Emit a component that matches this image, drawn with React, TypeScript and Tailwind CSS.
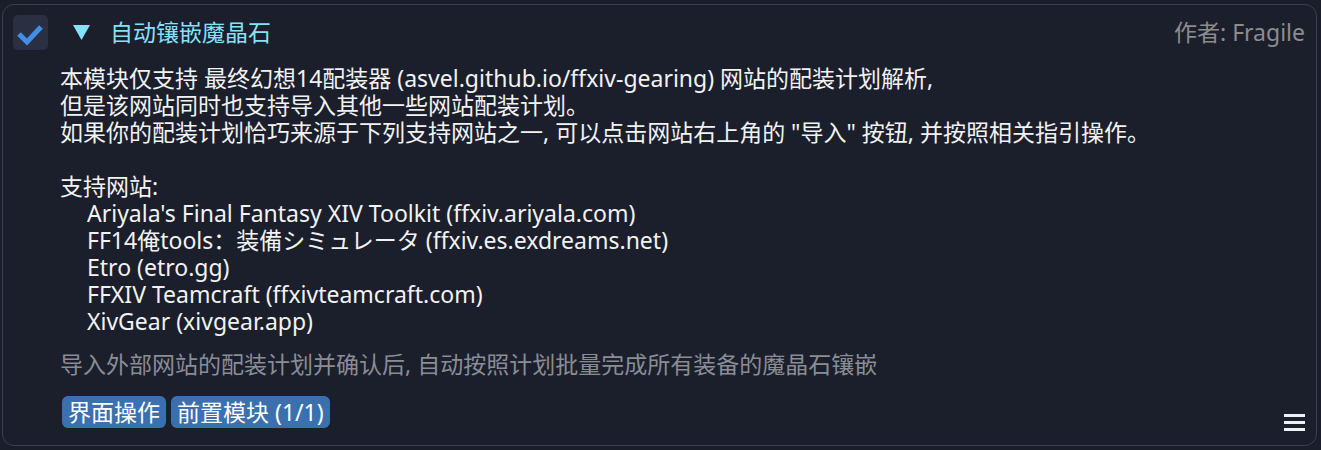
import React from "react";

const font = { fontFamily: '"Noto Sans", "Noto Sans CJK SC", sans-serif' };

export default function App() {
  return (
    <div className="w-[1321px] h-[450px] bg-[#1a1e2b] pt-[4px] pl-[2px]" style={font}>
      <div className="relative w-[1315px] h-[442px] rounded-[12px] border border-[#3a4154] bg-[#1b1f2c] text-[23px] leading-[27px] text-[#f2f2f2]">
        <div className="flex items-center pt-[10px] pl-[10px] pr-[11px]">
          <div className="w-[35px] h-[35px] rounded-[5px] bg-[#2a3042] flex items-center justify-center">
            <svg width="35" height="35" viewBox="0 0 35 35">
              <polyline points="6,19 14,27 28,12" fill="none" stroke="#3f8fe6" strokeWidth="5" strokeLinecap="butt" strokeLinejoin="miter" />
            </svg>
          </div>
          <svg className="ml-[25px]" width="17" height="15" viewBox="0 0 17 15">
            <polygon points="0,0 17,0 8.5,15" fill="#86e1f8" />
          </svg>
          <div className="ml-[20px] text-[#86e1f8]">自动镶嵌魔晶石</div>
          <div className="ml-auto text-[#8c8c8c]">作者: Fragile</div>
        </div>
        <div className="pl-[57px] mt-[15px]">
          <div>本模块仅支持 最终幻想14配装器 (asvel.github.io/ffxiv-gearing) 网站的配装计划解析,</div>
          <div>但是该网站同时也支持导入其他一些网站配装计划。</div>
          <div>如果你的配装计划恰巧来源于下列支持网站之一, 可以点击网站右上角的 "导入" 按钮, 并按照相关指引操作。</div>
          <div className="h-[27px]"></div>
          <div>支持网站:</div>
          <div className="pl-[27px]">
            <div>Ariyala's Final Fantasy XIV Toolkit (ffxiv.ariyala.com)</div>
            <div>FF14俺tools：装備シミュレータ (ffxiv.es.exdreams.net)</div>
            <div>Etro (etro.gg)</div>
            <div>FFXIV Teamcraft (ffxivteamcraft.com)</div>
            <div>XivGear (xivgear.app)</div>
          </div>
          <div className="mt-[16px] text-[#8a8d94]">导入外部网站的配装计划并确认后, 自动按照计划批量完成所有装备的魔晶石镶嵌</div>
          <div className="flex gap-[5px] mt-[18px] pl-[2px]">
            <div className="h-[32px] px-[6px] rounded-[6px] bg-[#3a70ae] text-white flex items-center">界面操作</div>
            <div className="h-[32px] px-[6px] rounded-[6px] bg-[#3a70ae] text-white flex items-center">前置模块 (1/1)</div>
          </div>
        </div>
        <svg className="absolute right-[11px] bottom-[14px]" width="21" height="17" viewBox="0 0 21 17">
          <rect x="0" y="0" width="21" height="3" fill="#eef0f3" />
          <rect x="0" y="7" width="21" height="3" fill="#eef0f3" />
          <rect x="0" y="14" width="21" height="3" fill="#eef0f3" />
        </svg>
      </div>
    </div>
  );
}
